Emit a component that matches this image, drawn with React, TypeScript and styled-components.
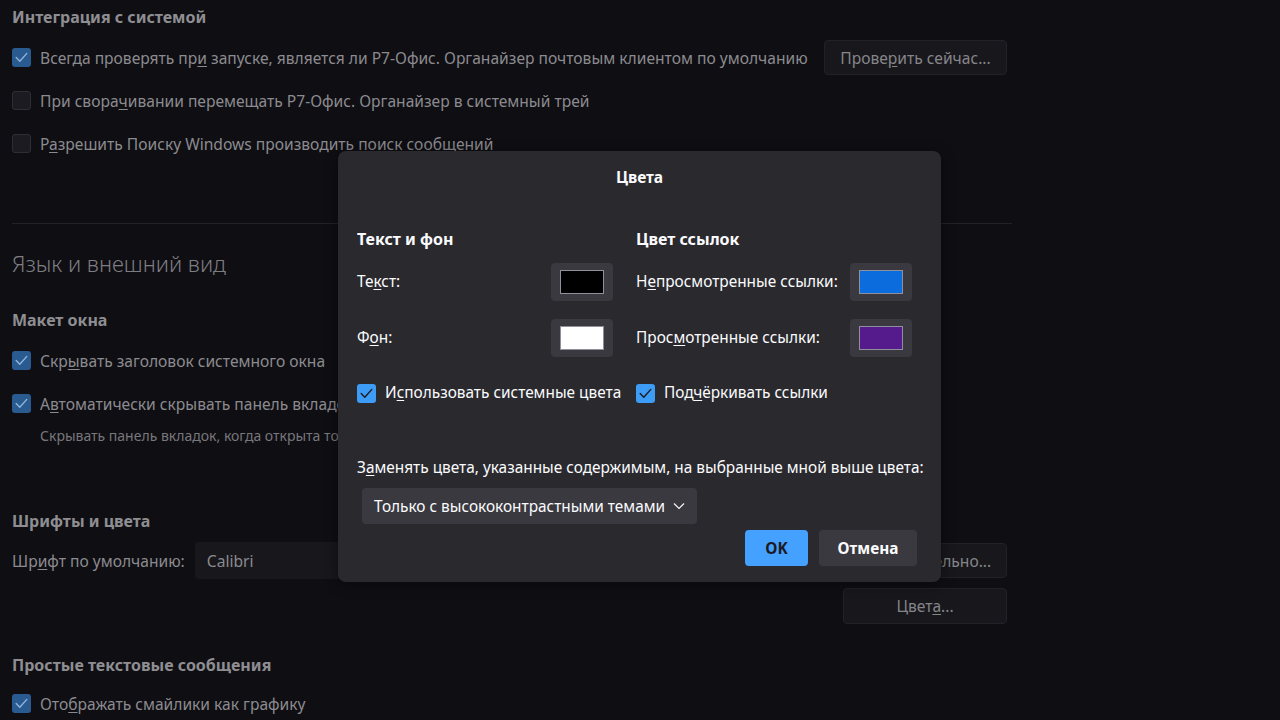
import styled, { createGlobalStyle } from 'styled-components';

const GlobalStyle = createGlobalStyle`
    html, body {
        margin: 0;
        padding: 0;
        background: #0f0e13;
        font-family: 'Noto Sans', 'Open Sans', sans-serif;
        overflow: hidden;
    }
    u {
        text-decoration-thickness: 1px;
        text-underline-offset: 2px;
    }
`;

const CheckIcon = ({color}: {color: string}) => (
    <svg width='13' height='11' viewBox='0 0 13 11' fill='none'>
        <path d='M1.2 5.6 L4.8 9.2 L11.8 1.4' stroke={color} strokeWidth='1.4' strokeLinecap='round' strokeLinejoin='round' />
    </svg>
);

const Checkbox = ({checked, dim}: {checked: boolean; dim?: boolean}) => (
    <Box $checked={checked} $dim={dim}>
        {checked && <CheckIcon color={dim ? '#8fb4dc' : '#1c1b22'} />}
    </Box>
);

const App = () => {
    return (
        <>
            <GlobalStyle />
            <Page>
                <GroupTitle>Интеграция с системой</GroupTitle>
                <Row>
                    <Checkbox checked dim />
                    <Label>Всегда проверять пр<u>и</u> запуске, является ли Р7-Офис. Органайзер почтовым клиентом по умолчанию</Label>
                    <PageButton $width={183}>Прове<u>р</u>ить сейчас...</PageButton>
                </Row>
                <Row>
                    <Checkbox checked={false} dim />
                    <Label>При свора<u>ч</u>ивании перемещать Р7-Офис. Органайзер в системный трей</Label>
                </Row>
                <Row>
                    <Checkbox checked={false} dim />
                    <Label>Р<u>а</u>зрешить Поиску Windows производить поиск сообщений</Label>
                </Row>

                <Separator />

                <SectionTitle>Язык и внешний вид</SectionTitle>
                <GroupTitle $top={30}>Макет окна</GroupTitle>
                <Row $top={6}>
                    <Checkbox checked dim />
                    <Label>Скр<u>ы</u>вать заголовок системного окна</Label>
                </Row>
                <Row>
                    <Checkbox checked dim />
                    <Label>А<u>в</u>томатически скрывать панель вкладок</Label>
                </Row>
                <Hint>Скрывать панель вкладок, когда открыта только одна вкладка</Hint>

                <GroupTitle $top={63}>Шрифты и цвета</GroupTitle>
                <FontRow>
                    <Label>Шр<u>и</u>фт по умолчанию:</Label>
                    <FontInput>Calibri</FontInput>
                    <PageButton $width={164}>Дополнительно...</PageButton>
                </FontRow>
                <RightRow>
                    <PageButton $width={164} $height={36}>Цвет<u>а</u>...</PageButton>
                </RightRow>

                <GroupTitle $top={29}>Простые текстовые сообщения</GroupTitle>
                <Row $top={-2}>
                    <Checkbox checked dim />
                    <Label>Ото<u>б</u>ражать смайлики как графику</Label>
                </Row>
            </Page>

            <Dialog>
                <DialogTitle>Цвета</DialogTitle>
                <Columns>
                    <Column>
                        <ColumnTitle>Текст и фон</ColumnTitle>
                        <SwatchRow>
                            <DialogLabel>Те<u>к</u>ст:</DialogLabel>
                            <SwatchButton><Swatch $color='#000000' /></SwatchButton>
                        </SwatchRow>
                        <SwatchRow>
                            <DialogLabel>Ф<u>о</u>н:</DialogLabel>
                            <SwatchButton><Swatch $color='#ffffff' /></SwatchButton>
                        </SwatchRow>
                        <DialogCheck>
                            <Checkbox checked />
                            <DialogLabel>И<u>с</u>пользовать системные цвета</DialogLabel>
                        </DialogCheck>
                    </Column>
                    <Column>
                        <ColumnTitle>Цвет ссылок</ColumnTitle>
                        <SwatchRow>
                            <DialogLabel>Н<u>е</u>просмотренные ссылки:</DialogLabel>
                            <SwatchButton><Swatch $color='#0a6cdd' /></SwatchButton>
                        </SwatchRow>
                        <SwatchRow>
                            <DialogLabel>Прос<u>м</u>отренные ссылки:</DialogLabel>
                            <SwatchButton><Swatch $color='#551a8b' /></SwatchButton>
                        </SwatchRow>
                        <DialogCheck>
                            <Checkbox checked />
                            <DialogLabel>Под<u>ч</u>ёркивать ссылки</DialogLabel>
                        </DialogCheck>
                    </Column>
                </Columns>
                <ReplaceLabel>З<u>а</u>менять цвета, указанные содержимым, на выбранные мной выше цвета:</ReplaceLabel>
                <Select>
                    <span>Только с высококонтрастными темами</span>
                    <svg width='12' height='8' viewBox='0 0 12 8' fill='none'>
                        <path d='M1 1.5 L6 6.5 L11 1.5' stroke='#fbfbfe' strokeWidth='1.1' />
                    </svg>
                </Select>
                <Footer>
                    <PrimaryButton>OK</PrimaryButton>
                    <SecondaryButton>Отмена</SecondaryButton>
                </Footer>
            </Dialog>
        </>
    );
};

export default App;

const Page = styled.div`
    width: 995px;
    padding: 5px 0 0 12px;
    color: #8b8b8f;
    font-size: 15.6px;
`;

const GroupTitle = styled.div<{$top?: number}>`
    font-weight: 700;
    font-size: 16px;
    line-height: 24px;
    color: #8e8e92;
    margin-top: ${(p) => p.$top || 0}px;
    margin-bottom: 7px;
`;

const SectionTitle = styled.div`
    font-size: 22px;
    font-weight: 300;
    line-height: 30px;
    color: #7d7d82;
    margin-top: 24px;
`;

const Row = styled.div<{$top?: number}>`
    display: flex;
    align-items: center;
    gap: 9px;
    height: 43px;
    margin-top: ${(p) => p.$top || 0}px;
`;

const Box = styled.span<{$checked: boolean; $dim?: boolean}>`
    flex: none;
    width: 19px;
    height: 19px;
    box-sizing: border-box;
    border-radius: 3px;
    display: flex;
    align-items: center;
    justify-content: center;
    background: ${(p) => (p.$checked ? (p.$dim ? '#2a5b90' : '#3d9df6') : '#1c1b21')};
    border: 1px solid ${(p) => (p.$checked ? 'transparent' : '#2f2e35')};
`;

const Label = styled.span`
    white-space: nowrap;
    color: #8b8b8f;
`;

const PageButton = styled.div<{$width: number; $height?: number}>`
    flex: none;
    width: ${(p) => p.$width}px;
    height: ${(p) => p.$height || 35}px;
    box-sizing: border-box;
    margin-left: auto;
    display: flex;
    align-items: center;
    justify-content: center;
    background: #18171c;
    border: 1px solid #222127;
    border-radius: 4px;
    color: #85858a;
`;

const Separator = styled.div`
    height: 1px;
    width: 1000px;
    background: #232228;
    margin-top: 58px;
`;

const Hint = styled.div`
    font-size: 14px;
    line-height: 20px;
    color: #77777c;
    padding-left: 28px;
    margin-top: 1px;
`;

const FontRow = styled.div`
    display: flex;
    align-items: center;
    gap: 10px;
    height: 37px;
    margin-top: 9px;
`;

const FontInput = styled.div`
    width: 320px;
    height: 37px;
    box-sizing: border-box;
    padding-left: 12px;
    display: flex;
    align-items: center;
    background: #18171c;
    border-radius: 4px;
    color: #8b8b8f;
`;

const RightRow = styled.div`
    display: flex;
    margin-top: 9px;
    height: 36px;
`;

const Dialog = styled.div`
    position: absolute;
    left: 338px;
    top: 151px;
    width: 603px;
    height: 431px;
    box-sizing: border-box;
    padding: 0 24px 0 19px;
    background: #2a2a2e;
    border-radius: 8px;
    color: #fbfbfe;
    font-size: 15.4px;
    display: flex;
    flex-direction: column;
    box-shadow: 0 2px 14px rgba(0, 0, 0, 0.45);
`;

const DialogTitle = styled.div`
    height: 52px;
    padding-left: 5px;
    display: flex;
    align-items: center;
    justify-content: center;
    font-size: 15.5px;
    font-weight: 700;
`;

const Columns = styled.div`
    display: grid;
    grid-template-columns: 256px 276px;
    column-gap: 23px;
    margin-top: 24px;
`;

const Column = styled.div`
    display: flex;
    flex-direction: column;
`;

const ColumnTitle = styled.div`
    font-size: 16px;
    font-weight: 700;
    line-height: 24px;
    margin-bottom: 12px;
`;

const SwatchRow = styled.div`
    display: flex;
    align-items: center;
    justify-content: space-between;
    height: 38px;
    margin-bottom: 18px;
`;

const DialogLabel = styled.span`
    white-space: nowrap;
    color: #fbfbfe;
    line-height: 22px;
`;

const ReplaceLabel = styled(DialogLabel)`
    margin-top: 52px;
`;

const SwatchButton = styled.div`
    width: 62px;
    height: 38px;
    box-sizing: border-box;
    border-radius: 4px;
    background: #3a393f;
    display: flex;
    align-items: center;
    justify-content: center;
`;

const Swatch = styled.div<{$color: string}>`
    width: 44px;
    height: 24px;
    box-sizing: border-box;
    border: 1px solid #8f8f9d;
    background: ${(p) => p.$color};
`;

const DialogCheck = styled.div`
    display: flex;
    align-items: center;
    gap: 9px;
    height: 24px;
    margin-top: 6px;
`;

const Select = styled.div`
    align-self: flex-start;
    margin: 9px 0 0 5px;
    height: 36px;
    box-sizing: border-box;
    padding: 0 12px;
    display: flex;
    align-items: center;
    gap: 8px;
    background: #3a393f;
    border-radius: 4px;
`;

const Footer = styled.div`
    display: flex;
    justify-content: flex-end;
    gap: 11px;
    margin-top: 6px;
`;

const PrimaryButton = styled.div`
    width: 63px;
    height: 36px;
    border-radius: 4px;
    background: #45a1ff;
    color: #1c1b22;
    font-weight: 700;
    display: flex;
    align-items: center;
    justify-content: center;
`;

const SecondaryButton = styled(PrimaryButton)`
    width: 98px;
    background: #3a393f;
    color: #fbfbfe;
`;
